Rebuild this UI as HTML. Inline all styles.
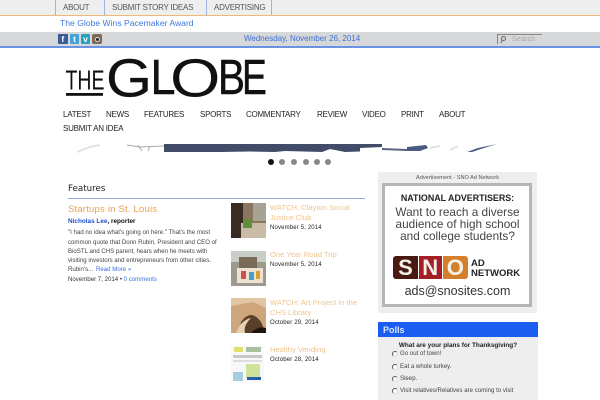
<!DOCTYPE html>
<html><head><meta charset="utf-8"><style>
html,body{margin:0;padding:0;width:600px;height:400px;overflow:hidden;background:#fff}
body{position:relative;font-family:"Liberation Sans",sans-serif}
.a{position:absolute;white-space:nowrap;line-height:1}
.b{position:absolute}
.nav{font-size:8px;color:#222;top:111px;letter-spacing:-.25px}
.top{font-size:8px;color:#555;top:3.5px;letter-spacing:-.25px}
.ti{font-size:7.6px;color:#f0c48e}
.d{font-size:6px;color:#222;letter-spacing:.15px}
.p{font-size:6.1px;color:#444}
.ex{font-size:6.1px;color:#444;left:68px}
.c{left:378px;width:159px;text-align:center}
.r{position:absolute;left:392px;width:4px;height:4px;border-radius:50%;border:1px solid #555;border-right-color:#ddd;border-bottom-color:#ddd;background:#fff}
.dot{position:absolute;top:159px;width:6px;height:6px;border-radius:50%;background:#888}
.i{position:absolute;top:34px;height:10px;color:#fff;font:bold 8.500px/10px 'Liberation Sans',sans-serif;text-align:center;border-radius:1px}
.s{position:absolute;top:256px;height:23px;color:#f4f0ea;font:bold 22px/24px 'Liberation Sans',sans-serif;text-align:center}
</style></head><body>
<div class="b" style="left:0;top:0;width:600px;height:15px;background:#eeeeee"></div>
<div class="b" style="left:0;top:15px;width:600px;height:1px;background:#f3b779"></div>
<div class="b" style="left:55px;top:0;width:1px;height:15px;background:#9db4e0"></div>
<div class="b" style="left:104px;top:0;width:1px;height:15px;background:#9db4e0"></div>
<div class="b" style="left:206px;top:0;width:1px;height:15px;background:#9db4e0"></div>
<div class="b" style="left:271px;top:0;width:1px;height:15px;background:#9db4e0"></div>
<div class="a top" style="left:63px">ABOUT</div>
<div class="a top" style="left:112px">SUBMIT STORY IDEAS</div>
<div class="a top" style="left:214px">ADVERTISING</div>
<div class="a" style="left:60px;top:19px;font-size:8.600px;color:#3f78e0">The Globe Wins Pacemaker Award</div>

<div class="b" style="left:0;top:32px;width:600px;height:14px;background:#d5d7d9"></div>
<div class="b" style="left:0;top:46px;width:600px;height:2px;background:#6b93e4"></div>
<div class="i" style="left:58px;width:9.500px;background:#3b5a96">f</div>
<div class="i" style="left:70px;width:9px;background:#3fa5d8">t</div>
<div class="i" style="left:81px;width:9px;background:#2a9fc4">v</div>
<div class="b" style="left:92px;top:34px;width:10px;height:10px;background:#7d6a58;border-radius:2px"></div>
<div class="b" style="left:95px;top:37px;width:3px;height:3px;border-radius:50%;background:#222;border:1px solid #ddd"></div>
<div class="a" style="left:244px;top:35px;font-size:8px;color:#3f6fd8">Wednesday, November 26, 2014</div>
<div class="b" style="left:497px;top:34px;width:44px;height:9px;border-left:1px solid #888;border-top:1px solid #888"></div>
<svg class="b" style="left:499px;top:35px" width="8" height="9"><circle cx="4.500" cy="3.500" r="2" fill="none" stroke="#666"/><path d="M3.200 5.200 2 8" stroke="#666"/></svg>
<div class="a" style="left:512px;top:35.500px;font-size:7px;color:#aaa;letter-spacing:.2px">Search</div>

<svg class="b" style="left:60px;top:50px" width="215" height="52" font-family="Liberation Sans" fill="#111">
<text x="5.500" y="39.500" font-size="28" textLength="39" lengthAdjust="spacingAndGlyphs">THE</text>
<rect x="6" y="43" width="37" height="2.800"/>
<text x="46" y="46.500" font-size="54" textLength="46" lengthAdjust="spacingAndGlyphs" stroke="#111" stroke-width=".2">G</text>
<text x="90.500" y="44" font-size="49.500" textLength="25" lengthAdjust="spacingAndGlyphs" stroke="#111" stroke-width=".5">L</text>
<text x="110" y="46.500" font-size="54" textLength="50.400" lengthAdjust="spacingAndGlyphs">O</text>
<text x="158" y="44" font-size="49.500" textLength="27" lengthAdjust="spacingAndGlyphs" stroke="#111" stroke-width=".5">B</text>
<text x="182" y="44" font-size="49.500" textLength="24.800" lengthAdjust="spacingAndGlyphs" stroke="#111" stroke-width=".5">E</text>
</svg>

<div class="a nav" style="left:63px">LATEST</div>
<div class="a nav" style="left:106px">NEWS</div>
<div class="a nav" style="left:144px">FEATURES</div>
<div class="a nav" style="left:200px">SPORTS</div>
<div class="a nav" style="left:246px">COMMENTARY</div>
<div class="a nav" style="left:317px">REVIEW</div>
<div class="a nav" style="left:362px">VIDEO</div>
<div class="a nav" style="left:401px">PRINT</div>
<div class="a nav" style="left:439px">ABOUT</div>
<div class="a nav" style="left:63px;top:125px">SUBMIT AN IDEA</div>

<svg class="b" style="left:60px;top:140px" width="450" height="16">
<path d="M17 12 L30 7 L40 5" stroke="#e2e2e2" stroke-width="2" fill="none"/>
<path d="M67 5 L80 7 L104 6 M78 5 L82 11 M90 6 L88 11" stroke="#aaa" fill="none"/>
<path d="M104 4 H322 V7 L300 8 V11.500 L285 12 L270 9 L262 12 L225 11 L215 12 L190 11.500 L160 12 L130 12 L104 12Z" fill="#414c68"/>
<path d="M322 8 L347 9 L347 11 L322 10Z" fill="#5a6480"/>
<path d="M347 7 L366 5 L368 8 L360 11 L347 11Z" fill="#4a5a80"/>
<path d="M407 12 L418 8 L437 4 L424 8 L412 12Z" fill="#4a5a80"/>
<path d="M370 8 L380 6 M390 10 L398 6" stroke="#e2e2e2" stroke-width="2" fill="none"/>
</svg>

<div class="dot" style="left:268px;background:#111"></div>
<div class="dot" style="left:279px"></div>
<div class="dot" style="left:291px"></div>
<div class="dot" style="left:303px"></div>
<div class="dot" style="left:314px"></div>
<div class="dot" style="left:325px"></div>

<div class="a" style="left:68px;top:184.500px;font-size:8.700px;color:#222;font-family:'DejaVu Sans',sans-serif">Features</div>
<div class="b" style="left:68px;top:198px;width:297px;height:1px;background:#8fabe0"></div>

<div class="a" style="left:68px;top:205px;font-size:9.500px;color:#e9a04e;letter-spacing:.2px">Startups in St. Louis</div>
<div class="a" style="left:68px;top:219px;font-size:6.400px;font-weight:bold;color:#111"><span style="color:#1f4fd0">Nicholas Lee</span>, reporter</div>
<div class="a ex" style="top:230px">"I had no idea what's going on here." That's the most</div>
<div class="a ex" style="top:239.500px">common quote that Donn Rubin, President and CEO of</div>
<div class="a ex" style="top:248.500px">BioSTL and CHS parent, hears when he meets with</div>
<div class="a ex" style="top:257.500px">visiting investors and entrepreneurs from other cities.</div>
<div class="a ex" style="top:267px">Rubin's... <span style="position:absolute;left:28px;color:#3f6fd8">Read More »</span></div>
<div class="a" style="left:68px;top:277px;font-size:6.100px;color:#333">November 7, 2014 • <span style="color:#3f6fd8">0 comments</span></div>

<svg class="b" style="left:231px;top:203px" width="35" height="35"><rect width="35" height="35" fill="#8a7660"/><rect width="12" height="35" fill="#3a2c22"/><rect x="10" y="20" width="25" height="15" fill="#c9bba6"/><rect x="12" y="16" width="9" height="9" fill="#5f8f3a"/><rect x="22" y="0" width="13" height="18" fill="#a8a294"/></svg>
<div class="a ti" style="left:270px;top:204px">WATCH: Clayton Social</div>
<div class="a ti" style="left:270px;top:214px">Justice Club</div>
<div class="a d" style="left:270px;top:225px">November 5, 2014</div>

<svg class="b" style="left:231px;top:251px" width="35" height="35"><rect width="35" height="35" fill="#9c9a8c"/><rect y="0" width="35" height="11" fill="#c9cdc8"/><rect x="8" y="6" width="18" height="14" fill="#7a6a58"/><rect x="6" y="17" width="26" height="15" fill="#eee2d4"/><rect x="10" y="20" width="5" height="8" fill="#d0504a"/><rect x="18" y="21" width="5" height="8" fill="#4aa0c0"/><rect x="25" y="20" width="4" height="8" fill="#d9a030"/></svg>
<div class="a ti" style="left:270px;top:251px">One Year Road Trip</div>
<div class="a d" style="left:270px;top:262px">November 5, 2014</div>

<svg class="b" style="left:231px;top:298px" width="35" height="35"><rect width="35" height="35" fill="#cfa67c"/><path d="M0 8 L22 4 L35 10 V0 H0Z" fill="#e2c6a4"/><path d="M10 24 Q20 10 30 24 L35 35 H8Z" fill="#5a4029"/><path d="M5 35 Q10 22 20 20 Q12 28 14 35Z" fill="#e6d0b2"/><path d="M20 35 Q26 28 35 30 V35Z" fill="#1d1510"/></svg>
<div class="a ti" style="left:270px;top:299px">WATCH: Art Project in the</div>
<div class="a ti" style="left:270px;top:309px">CHS Library</div>
<div class="a d" style="left:270px;top:320px">October 29, 2014</div>

<svg class="b" style="left:231px;top:346px" width="35" height="35"><rect width="33" height="35" fill="#f6f8fa"/><rect x="3" y="1" width="9" height="5" fill="#e3e06a"/><rect x="15" y="1" width="15" height="5" fill="#a8c0a0"/><rect x="2" y="9" width="29" height="3" fill="#c8c8c8"/><rect x="2" y="14" width="29" height="2" fill="#ddd"/><rect x="15" y="18" width="14" height="14" fill="#cfe29a"/><rect x="2" y="26" width="10" height="9" fill="#a8cbe4"/><rect x="16" y="31" width="14" height="3" fill="#2a5cb0"/></svg>
<div class="a ti" style="left:270px;top:346px">Healthy Vending</div>
<div class="a d" style="left:270px;top:357px">October 28, 2014</div>

<div class="b" style="left:378px;top:172px;width:159px;height:141px;background:#eeeeee"></div>
<div class="a c" style="top:175.500px;font-size:5.600px;color:#555">Advertisement - SNO Ad Network</div>
<div class="b" style="left:382px;top:183px;width:144px;height:118px;background:#fff;border:3px solid #b4b6b8"></div>
<div class="a c" style="top:193.500px;font-size:8.900px;font-weight:bold;color:#222">NATIONAL ADVERTISERS:</div>
<div class="a c" style="top:207px;font-size:11.800px;color:#444">Want to reach a diverse</div>
<div class="a c" style="top:219px;font-size:11.800px;color:#444">audience of high school</div>
<div class="a c" style="top:231px;font-size:11.800px;color:#444">and college students?</div>
<div class="s" style="left:393px;width:25px;background:#4a1a12;border-radius:3px 0 0 3px">S</div>
<div class="s" style="left:418.500px;width:23.500px;background:#a31f25">N</div>
<div class="s" style="left:442.500px;width:25.500px;background:#d4802a;border-radius:0 3px 3px 0">O</div>
<div class="a" style="left:471px;top:259px;font-size:9.500px;font-weight:bold;color:#222">AD</div>
<div class="a" style="left:471px;top:268.500px;font-size:9.500px;font-weight:bold;color:#222">NETWORK</div>
<div class="a c" style="top:285px;font-size:12.500px;color:#333">ads@snosites.com</div>

<div class="b" style="left:378px;top:322px;width:160px;height:78px;background:#eeeeee"></div>
<div class="b" style="left:378px;top:322px;width:160px;height:15px;background:#1a5df0"></div>
<div class="a" style="left:383px;top:325.500px;font-size:9px;font-weight:bold;color:#dfe8ff">Polls</div>
<div class="a" style="left:378px;width:160px;text-align:center;top:343px;font-size:6.400px;font-weight:bold;color:#222">What are your plans for Thanksgiving?</div>
<div class="r" style="top:351px"></div><div class="a p" style="left:400px;top:351px">Go out of town!</div>
<div class="r" style="top:364px"></div><div class="a p" style="left:400px;top:364px">Eat a whole turkey.</div>
<div class="r" style="top:376px"></div><div class="a p" style="left:400px;top:376px">Sleep.</div>
<div class="r" style="top:388px"></div><div class="a p" style="left:400px;top:388px">Visit relatives/Relatives are coming to visit</div>
</body></html>
